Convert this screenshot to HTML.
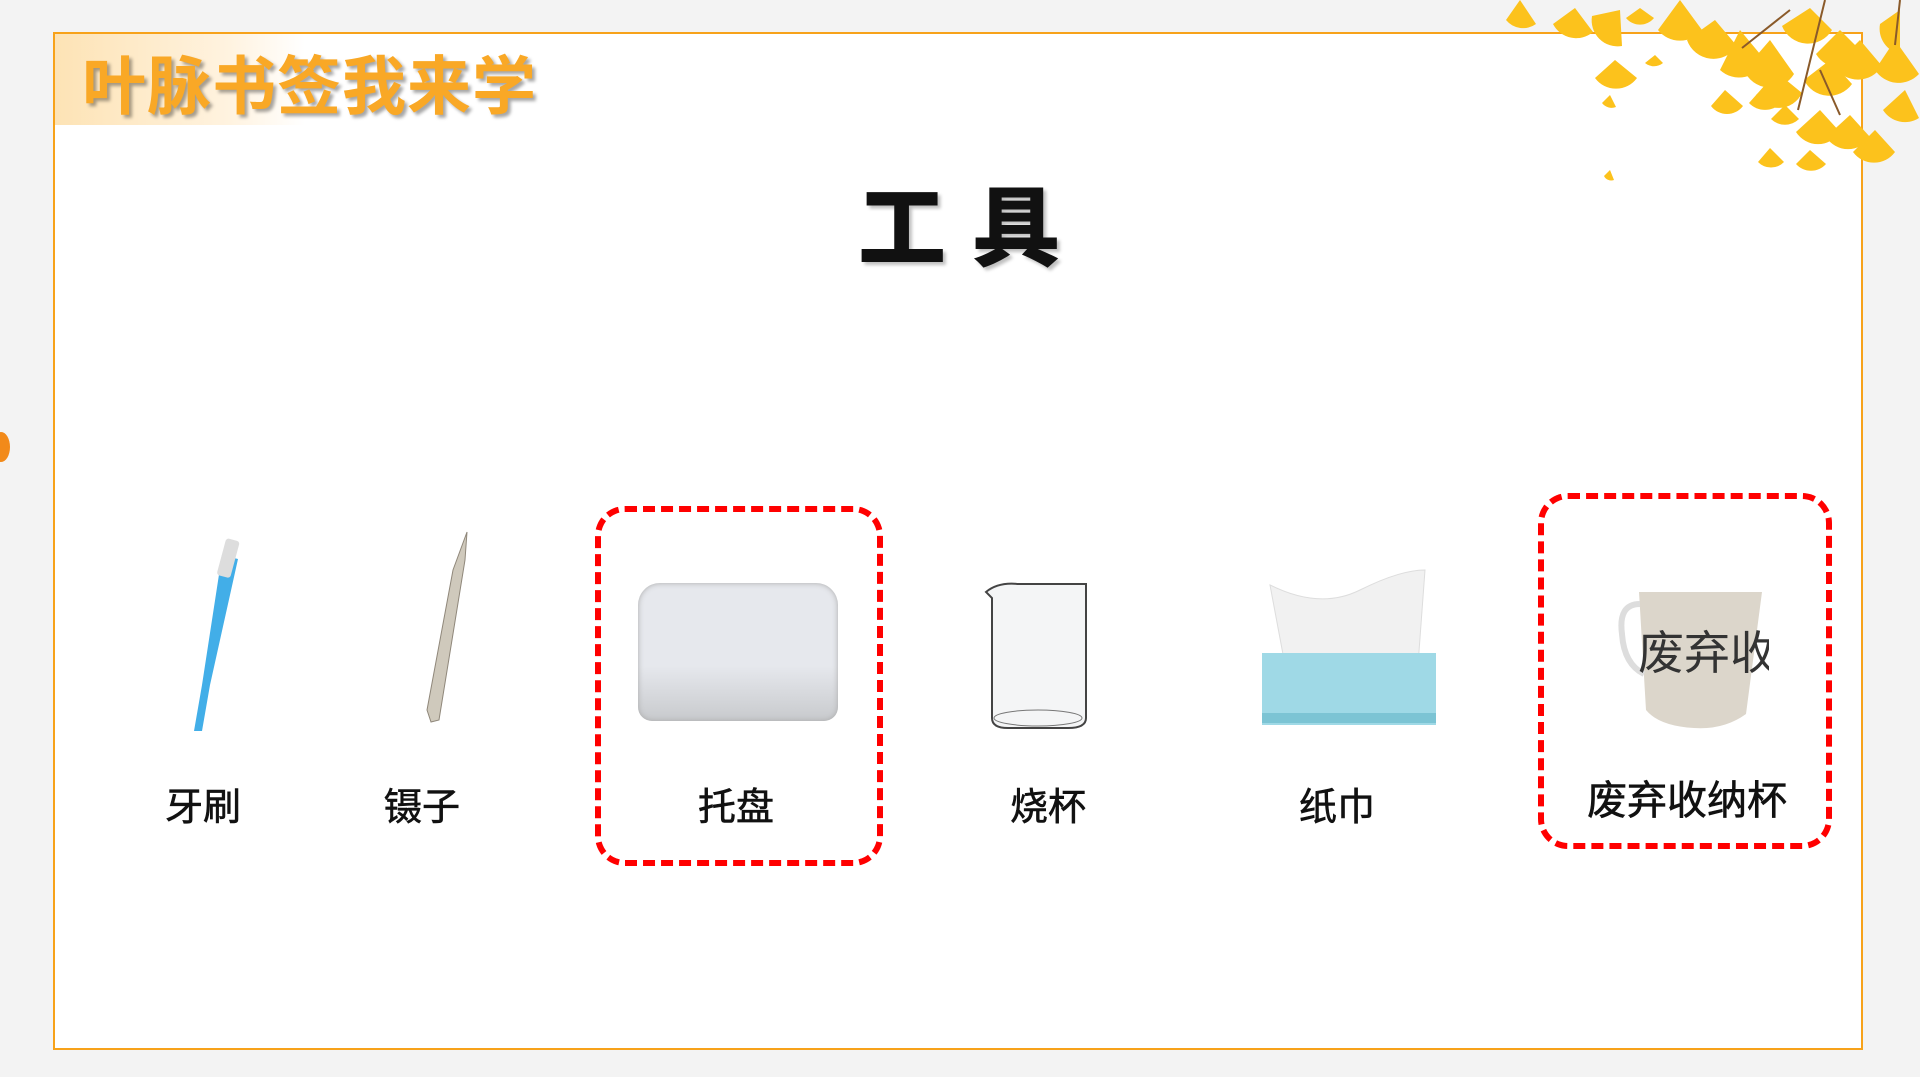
<!DOCTYPE html>
<html><head><meta charset="utf-8"><style>
body{margin:0;width:1920px;height:1077px;overflow:hidden;background:#f3f3f3;position:relative;font-family:"Liberation Sans","Noto Sans CJK SC",sans-serif}
.frame{position:absolute;left:53px;top:32px;width:1810px;height:1018px;border:2px solid #f7a21a;background:#fff;box-sizing:border-box}
.hdr{position:absolute;left:55px;top:34px;width:250px;height:91px;background:linear-gradient(90deg,#fde3b5,#fff3e0 70%,rgba(255,255,255,0))}
.title{position:absolute;left:82px;top:36px;font-size:64px;font-weight:bold;color:#f9a826;text-shadow:3px 3px 3px rgba(0,0,0,.35);letter-spacing:1px}
.big{position:absolute;left:12px;width:1920px;top:158px;text-align:center;font-size:88px;font-weight:900;color:#111;letter-spacing:26px;text-shadow:3px 3px 3px rgba(0,0,0,.25)}
.lb{position:absolute;font-size:38px;color:#111;transform:translateX(-50%);white-space:nowrap;top:776px;-webkit-text-stroke:0.6px #111}
.box{position:absolute;border:6px dashed #ff0000;border-radius:30px;box-sizing:border-box}
</style></head><body>
<div class="frame"></div>
<div class="hdr"></div>
<div class="title">叶脉书签我来学</div>
<div class="big">工具</div>
<svg style="position:absolute;left:1480px;top:0" width="440" height="190">
<g fill="#fcc21c">
<path d="M40 0l-14 20a22 22 0 0 0 30 4z"/><path d="M95 8l-22 16a26 26 0 0 0 40 8z"/><path d="M140 10l-28 6a26 26 0 0 0 30 30z"/><path d="M135 60l-20 18a26 26 0 0 0 42 0z"/><path d="M200 0l-22 30a28 28 0 0 0 44 0z"/><path d="M235 20l-28 20a28 28 0 0 0 50 6z"/><path d="M260 30l-20 40a28 28 0 0 0 45 -10z"/><path d="M290 40l-26 30a28 28 0 0 0 50 4z"/><path d="M300 75l-24 20a26 26 0 0 0 46 -2z"/><path d="M330 8l-28 18a28 28 0 0 0 50 4z"/><path d="M360 30l-24 24a28 28 0 0 0 48 0z"/><path d="M380 40l-26 26a28 28 0 0 0 48 0z"/><path d="M350 60l-26 20a28 28 0 0 0 48 4z"/><path d="M340 110l-24 22a26 26 0 0 0 44 0z"/><path d="M370 115l-24 22a26 26 0 0 0 44 0z"/><path d="M395 130l-22 22a26 26 0 0 0 42 0z"/><path d="M415 40l-20 30a28 28 0 0 0 44 4z"/><path d="M425 90l-22 20a26 26 0 0 0 36 8z"/><path d="M420 10l-20 14a26 26 0 0 0 20 30z"/><path d="M175 55l-10 8a14 14 0 0 0 18 0z"/><path d="M245 90l-14 16a20 20 0 0 0 32 0z"/><path d="M285 85l-16 18a22 22 0 0 0 32 0z"/><path d="M305 105l-14 14a20 20 0 0 0 28 0z"/><path d="M130 95l-8 8a12 12 0 0 0 14 4z"/><path d="M290 148l-12 14a18 18 0 0 0 26 0z"/><path d="M330 150l-14 14a20 20 0 0 0 30 0z"/><path d="M130 170l-6 6a8 8 0 0 0 10 4z"/><path d="M160 8l-14 10a18 18 0 0 0 28 0z"/>
</g>
<path d="M262 48L310 10M318 110L345 0M340 70L360 115M420 0L415 45" stroke="#8a5a2a" stroke-width="2" fill="none"/>
</svg>
<svg style="position:absolute;left:178px;top:535px" width="75" height="200"><path d="M44 20L60 24L32 150L24 196L16 196L24 150Z" fill="#42aee8"/><rect x="44" y="4" width="14" height="38" rx="3" fill="#ddd" transform="rotate(15 50 20)"/></svg>
<svg style="position:absolute;left:405px;top:530px" width="70" height="200"><path d="M62 2L60 30L34 190L26 192L22 180L48 40Z" fill="#cfc9bc" stroke="#8f877a" stroke-width="1"/></svg>
<div style="position:absolute;left:638px;top:583px;width:200px;height:138px;border-radius:22px 22px 14px 14px;background:linear-gradient(180deg,#e6e8ed 60%,#c8cacd);box-shadow:inset 0 0 6px #aaa"></div>
<svg style="position:absolute;left:978px;top:578px" width="115" height="155"><path d="M8 14Q20 4 40 6H108V140Q108 150 90 150H30Q14 150 14 140V20Z" fill="#f4f5f6" stroke="#444" stroke-width="2"/><ellipse cx="60" cy="140" rx="44" ry="8" fill="none" stroke="#777"/></svg>
<svg style="position:absolute;left:1260px;top:565px" width="178" height="165"><path d="M10 20Q60 45 100 25Q140 5 165 5L158 100H25Z" fill="#f1f1f1" stroke="#ddd"/><rect x="2" y="88" width="174" height="72" fill="#9fd9e6"/><rect x="2" y="148" width="174" height="10" fill="#7cc4d4"/></svg>
<svg style="position:absolute;left:1614px;top:584px" width="155" height="150"><path d="M25 8H148L132 130Q110 146 80 144Q45 142 32 126Z" fill="#dcd6cb"/><path d="M26 20Q4 20 8 50Q10 80 30 90" fill="none" stroke="#ddd" stroke-width="6"/><text x="24" y="85" font-size="46" fill="#333" font-family="Noto Sans CJK SC">废弃收</text></svg>
<div class="box" style="left:595px;top:506px;width:288px;height:360px"></div>
<div class="box" style="left:1538px;top:493px;width:294px;height:356px"></div>
<div class="lb" style="left:203px">牙刷</div>
<div class="lb" style="left:422px">镊子</div>
<div class="lb" style="left:736px">托盘</div>
<div class="lb" style="left:1048px">烧杯</div>
<div class="lb" style="left:1337px">纸巾</div>
<div class="lb" style="left:1687px;top:768px;font-size:40px">废弃收纳杯</div>
<div style="position:absolute;left:-8px;top:432px;width:18px;height:30px;border-radius:50%;background:#f28a1a"></div>
</body></html>
